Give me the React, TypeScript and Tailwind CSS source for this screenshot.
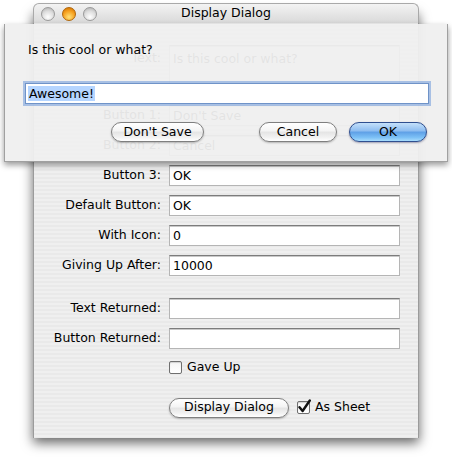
import React from "react";

const stripes =
  "bg-[image:repeating-linear-gradient(to_bottom,#efefef_0px,#efefef_2px,#e9e9e9_2px,#e9e9e9_4px)]";

const Field = ({ value, tall }: { value?: string; tall?: boolean }) => (
  <div
    className={`w-[231px] ${tall ? "h-[51px] pt-[3px]" : "h-[21px]"} bg-white border border-[#b5b5b5] border-t-[#7c7c7c] shadow-[inset_0_1px_0_#c9c9c9] pl-[3px] leading-[19px]`}
  >
    {value}
  </div>
);

const Row = ({ label, value, tall }: { label: string; value?: string; tall?: boolean }) => (
  <div className={`flex ${tall ? "items-start" : "items-center"} gap-[8px]`}>
    <div className={`w-[127px] text-right ${tall ? "pt-[3px] leading-[19px]" : ""}`}>{label}</div>
    <Field value={value} tall={tall} />
  </div>
);

const PillButton = ({ label, width, primary }: { label: string; width: string; primary?: boolean }) => (
  <div
    className={`${width} h-[20px] rounded-full border flex items-center justify-center leading-none ${
      primary
        ? "border-[#2f4f8f] bg-[image:linear-gradient(to_bottom,#c4e0fa_0%,#8cbcf0_45%,#5e9fe6_50%,#7cc0f6_80%,#a8dcfc_100%)] shadow-[0_1px_2px_rgba(0,0,60,0.35)]"
        : "border-[#7f7f7f] bg-[image:linear-gradient(to_bottom,#ffffff_0%,#f4f4f4_45%,#e4e4e4_50%,#f2f2f2_80%,#ffffff_100%)] shadow-[0_1px_2px_rgba(0,0,0,0.25)]"
    }`}
  >
    {label}
  </div>
);

const Checkbox = ({ checked, label }: { checked?: boolean; label: string }) => (
  <div className="flex items-center gap-[5px]">
    <div className="relative w-[13px] h-[13px] rounded-[2px] border border-[#6f6f6f] bg-[image:linear-gradient(to_bottom,#f4f4f4,#ffffff)] shadow-[inset_0_1px_1px_rgba(0,0,0,0.15)]">
      {checked && (
        <svg className="absolute -left-[1px] -top-[3px]" width="15" height="15" viewBox="0 0 15 15">
          <path d="M2.5 8.2 L5.6 12 L12.8 1.5" fill="none" stroke="#111" strokeWidth="2.4" strokeLinecap="round" strokeLinejoin="round" />
        </svg>
      )}
    </div>
    <span>{label}</span>
  </div>
);

const Light = ({ color }: { color: "gray" | "orange" }) => (
  <div
    className={`w-[14px] h-[14px] rounded-full border ${
      color === "orange"
        ? "border-[#b0660a] bg-[image:radial-gradient(circle_at_50%_75%,#ffe27a_0%,#f6a01e_55%,#c86a00_100%)]"
        : "border-[#9a9a9a] bg-[image:radial-gradient(circle_at_50%_75%,#ffffff_0%,#dcdcdc_55%,#a9a9a9_100%)]"
    }`}
  />
);

export default function App() {
  return (
    <div className="relative w-[452px] h-[457px] bg-white overflow-hidden font-['DejaVu_Sans',sans-serif] text-[12.5px] text-black">
      {/* main window */}
      <div className="ml-[33px] mt-[3px] w-[386px] h-[430px] flex flex-col rounded-t-[6px] shadow-[0_10px_12px_rgba(0,0,0,0.6)]">
        <div className="relative h-[21px] rounded-t-[6px] border border-b-0 border-[#a9a9a9] bg-[image:linear-gradient(to_bottom,#f3f3f3,#d9d9d9)] flex items-center justify-center">
          <div className="absolute left-[7px] top-[3px] flex gap-[7px]">
            <Light color="gray" />
            <Light color="orange" />
            <Light color="gray" />
          </div>
          <span>Display Dialog</span>
        </div>
        <div className={`flex-1 flex flex-col pt-[22px] pb-[20px] border-x border-[#9b9b9b] ${stripes}`}>
          <div className="flex flex-col gap-[9px]">
            <Row label="Text:" value="Is this cool or what?" tall />
            <Row label="Button 1:" value="Don't Save" />
            <Row label="Button 2:" value="Cancel" />
            <Row label="Button 3:" value="OK" />
            <Row label="Default Button:" value="OK" />
            <Row label="With Icon:" value="0" />
            <Row label="Giving Up After:" value="10000" />
          </div>
          <div className="flex flex-col gap-[9px] mt-[22px]">
            <Row label="Text Returned:" />
            <Row label="Button Returned:" />
            <div className="ml-[135px]">
              <Checkbox label="Gave Up" />
            </div>
          </div>
          <div className="ml-[135px] mt-[21px] flex items-center gap-[8px]">
            <PillButton label="Display Dialog" width="w-[120px]" />
            <Checkbox checked label="As Sheet" />
          </div>
        </div>
      </div>

      {/* sheet */}
      <div className="absolute left-[4px] top-[24px] w-[444px] h-[138px] bg-[rgba(239,239,239,0.95)] border-x border-b border-[#a0a0a0] shadow-[0_3px_6px_rgba(0,0,0,0.4)] px-[20px] pt-[18px]">
        <div className="pl-[3px] leading-[16px]">Is this cool or what?</div>
        <div className="mt-[25px] w-[404px] h-[21px] bg-white border border-[#6f93c8] shadow-[0_0_0_2px_rgba(120,160,220,0.6)] flex items-center pl-[2px]">
          <span className="bg-[#b5d5ff] leading-[15px] px-[1px]">Awesome!</span>
        </div>
        <div className="mt-[18px] flex items-center">
          <div className="ml-[86px]">
            <PillButton label="Don't Save" width="w-[93px]" />
          </div>
          <div className="ml-auto flex gap-[12px]">
            <PillButton label="Cancel" width="w-[78px]" />
            <PillButton label="OK" width="w-[78px]" primary />
          </div>
        </div>
      </div>
    </div>
  );
}
